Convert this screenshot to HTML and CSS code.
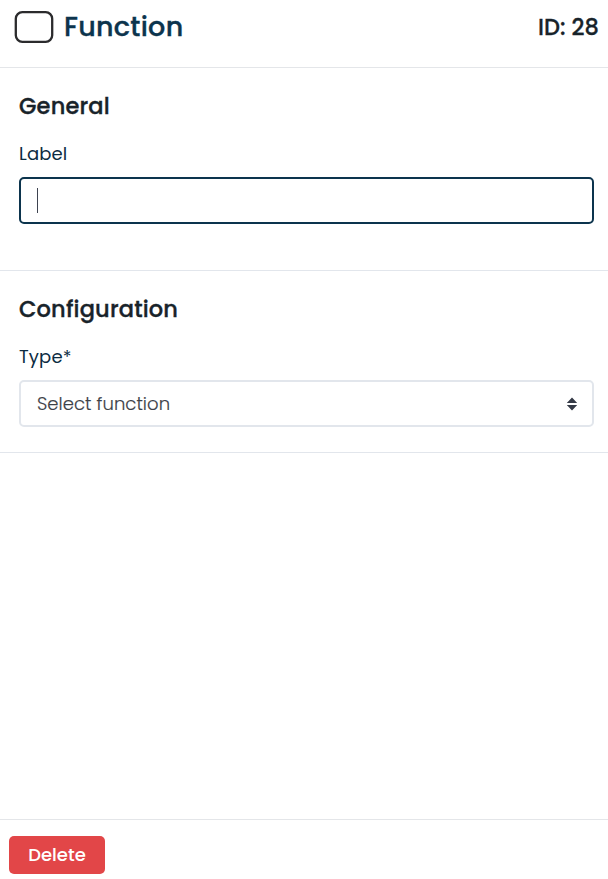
FILE: index.html
```html
<!DOCTYPE html>
<html lang="en">
<head>
<meta charset="utf-8">
<title>Function</title>
<link rel="stylesheet" href="styles.css">
</head>
<body>
<main class="panel">
  <header class="header">
    <svg class="shape-icon" width="40" height="34" viewBox="0 0 40 34" fill="none"><rect x="1.8" y="2.2" width="36.4" height="29.6" rx="6.5" stroke="#2b2b2d" stroke-width="2.3"/></svg>
    <h1 class="title">Function</h1>
    <span class="node-id">ID: 28</span>
  </header>
  <section class="section general">
    <h2 class="heading">General</h2>
    <div class="label">Label</div>
    <div class="field focused"><span class="caret"></span></div>
  </section>
  <section class="section configuration">
    <h2 class="heading">Configuration</h2>
    <div class="label">Type*</div>
    <div class="field select">
      <span class="placeholder">Select function</span>
      <svg width="12" height="14" viewBox="0 0 12 14" fill="#343a46"><path d="M6 .5 11.2 6H.8zM.8 8h10.4L6 13.5z"/></svg>
    </div>
  </section>
  <footer class="footer">
    <button class="delete" type="button">Delete</button>
  </footer>
</main>
</body>
</html>
```
FILE: styles.css
```css
* { box-sizing: border-box; }
body {
  margin: 0;
  background: #fff;
  color: #18232a;
  font-family: Poppins, Inter, "Liberation Sans", sans-serif;
}
.panel { display: flex; flex-direction: column; height: 879px; overflow: hidden; }
.header {
  display: flex;
  align-items: center;
  height: 68px;
  padding: 0 9px 13px 14px;
  border-bottom: 1px solid #e4e6e9;
}
.shape-icon { flex: none; }
.title {
  margin: 0 0 0 10px;
  color: #0c344d;
  font-size: 27px;
  font-weight: 500;
  line-height: 40px;
  letter-spacing: 0.3px;
  -webkit-text-stroke: 0.35px currentColor;
}
.node-id {
  margin-left: auto;
  font-size: 22.5px;
  font-weight: 500;
  line-height: 40px;
  letter-spacing: 0.05px;
  -webkit-text-stroke: 0.3px currentColor;
}
.section { padding: 22px 14px 0 19px; border-bottom: 1px solid #e2e6ec; }
.general { height: 203px; }
.configuration { height: 182px; }
.heading {
  margin: 0;
  font-size: 22.5px;
  font-weight: 500;
  line-height: 33px;
  letter-spacing: 0.18px;
  -webkit-text-stroke: 0.35px currentColor;
}
.label { margin: 18px 0 10px; color: #0c2c42; font-size: 18px; line-height: 26px; letter-spacing: 0.12px; }
.field {
  display: flex;
  align-items: center;
  height: 47px;
  padding: 0 14px 0 16px;
  border: 2px solid #e2e6ec;
  border-radius: 5px;
}
.focused { border-color: #0c344d; }
.caret { width: 1px; height: 25px; background: #3e4350; }
.select { justify-content: space-between; }
.placeholder { color: #3c4148; font-size: 18px; font-weight: 300; letter-spacing: 0.05px; -webkit-text-stroke: 0.15px currentColor; }
.footer { height: 60px; margin-top: auto; padding: 16px 9px 0; border-top: 1px solid #e4e6e9; }
.delete {
  display: block;
  width: 96px;
  height: 38px;
  padding: 0;
  border: 0;
  border-radius: 5px;
  background: #e24648;
  color: #fff;
  font-family: inherit;
  font-size: 18px;
  font-weight: 500;
  line-height: 38px;
}
```
